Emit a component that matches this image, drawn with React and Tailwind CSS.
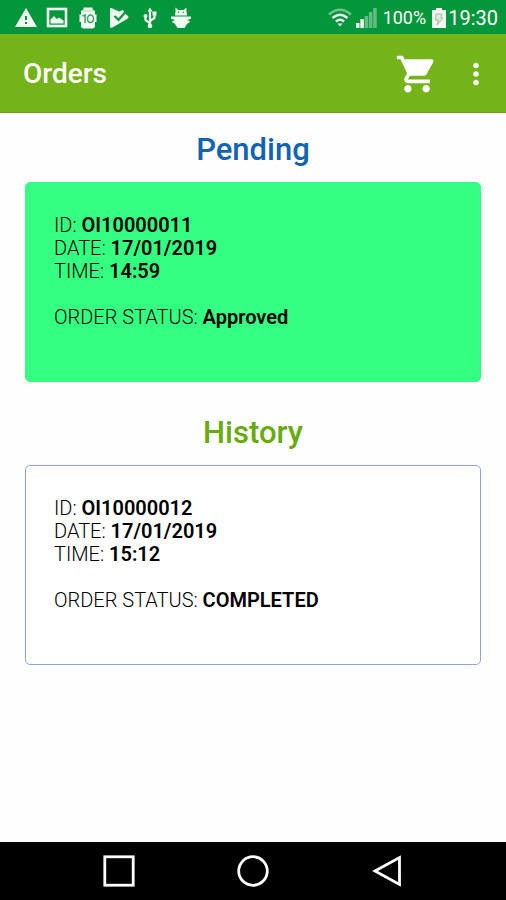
import React from 'react'
import { MdShoppingCart, MdMoreVert, MdWarning } from 'react-icons/md'

const orders = {
  pending: { id: 'OI10000011', date: '17/01/2019', time: '14:59', status: 'Approved' },
  history: { id: 'OI10000012', date: '17/01/2019', time: '15:12', status: 'COMPLETED' },
}

const StatusBar = () => {
  return (
    <div className='h-[34px] bg-[#03963b] flex items-center justify-between pl-[14px] pr-2 pt-[2px] text-white'>
      {/* Notifications */}
      <div className='flex items-center gap-[7px]'>
        <MdWarning className='w-6 h-6 text-[#f0faf0]' />
        <svg className='w-6 h-6' viewBox='0 0 24 24' fill='none'>
          <rect x='3' y='3' width='18' height='17' stroke='#f0faf0' strokeWidth='2.6' />
          <path d='M5.500 17.500v-4l3.500-3.500 2.500 3 2.500-1.500 4.500 3v3z' fill='#f0faf0' />
        </svg>
        {/* Jar */}
        <svg className='w-6 h-6' viewBox='0 0 24 24'>
          <path d='M7.500 1.500h9v2l2.500 1.500v3.500h-14V5l2.500-1.500zM3.500 8.500h17v7.500h-17zM5 16h14v5l-2 1.500H7L5 21z' fill='#f0faf0' />
          <path d='M7 4.800h10' stroke='#9ad3ab' strokeWidth='.8' />
          <path d='M6.500 10l2.500-1v8' fill='none' stroke='#3da363' strokeWidth='1.500' />
          <ellipse cx='14.500' cy='12.800' rx='3' ry='3.800' fill='none' stroke='#3da363' strokeWidth='1.500' />
        </svg>
        {/* Play with check */}
        <svg className='w-6 h-6' viewBox='0 0 24 24'>
          <path d='M3 3.500Q3 1.500 5 2.200L12 5.500 16 4l2.500 4 2.500 2Q22.500 11.500 20.500 12.800L5 21.700Q3 22.300 3 20.500z' fill='#f0faf0' />
          <path d='M7.500 10l4 3.800L18.500 6' fill='none' stroke='#03963b' strokeWidth='2.200' />
        </svg>
        {/* USB */}
        <svg className='w-6 h-6' viewBox='0 0 24 24' fill='none' stroke='#f0faf0' strokeWidth='2.200'>
          <path d='M12 4v16M12 17.500L7.500 14v-4M12 15l4.500-3V8' />
          <path d='M9.500 5.500L12 1.500l2.500 4z' fill='#f0faf0' stroke='none' />
          <circle cx='12' cy='20' r='2.300' fill='#f0faf0' stroke='none' />
          <circle cx='7.500' cy='10' r='2' fill='#f0faf0' stroke='none' />
          <path d='M14.500 5.500h4v4h-4z' fill='#f0faf0' stroke='none' />
        </svg>
        {/* Debug bug */}
        <svg className='w-6 h-6' viewBox='0 0 24 24'>
          <path d='M6.500 1.500L9.500 4h5l3-2.500v4l.5 4H6l.5-4z' fill='#f0faf0' />
          <path d='M2 10.500h20v2.200l-2.500.8L21 16l-3 2-2.500 4h-7L6 18l-3-2 1.500-2.500L2 12.700z' fill='#f0faf0' />
          <path d='M3 14.300h2.500M18.500 14.300H21' stroke='#03963b' strokeWidth='.8' />
          <circle cx='9.500' cy='6.300' r='.7' fill='#03963b' />
          <circle cx='14.500' cy='6.300' r='.7' fill='#03963b' />
        </svg>
      </div>

      {/* Connection, battery and clock */}
      <div className='flex items-center'>
        <svg className='w-6 h-5' viewBox='0 0 24 20' fill='none' stroke='#f0faf0' strokeWidth='2.600'>
          <path d='M1 6.500Q12-3 23 6.500' opacity='.45' />
          <path d='M4.500 10Q12 3.500 19.500 10' />
          <path d='M8 13.500Q12 10 16 13.500' />
          <path d='M9.500 15.500h5L12 18.500z' fill='#f0faf0' stroke='none' />
        </svg>
        <svg className='w-[21px] h-5 ml-1' viewBox='0 0 21 20' fill='#f0faf0'>
          <rect x='0' y='15' width='3.500' height='5' />
          <rect x='4.300' y='11' width='3.500' height='9' />
          <rect x='8.600' y='8' width='3.500' height='12' opacity='.4' />
          <rect x='12.900' y='4' width='3.500' height='16' opacity='.4' />
          <rect x='17.200' y='0' width='3.500' height='20' opacity='.4' />
        </svg>
        <span className='text-lg leading-6 ml-[6px]'>100%</span>
        <svg className='w-[14px] h-[22px] ml-[6px]' viewBox='0 0 14 22'>
          <path d='M4 1h6v2h4v18H0V3h4z' fill='#f0faf0' />
          <path d='M4 7h6l-1 4h2l-6 7 1.500-5H3.500z' fill='#dcebdc' stroke='#9aa89a' strokeWidth='.8' />
        </svg>
        <span className='text-xl leading-6 ml-[2px]'>19:30</span>
      </div>
    </div>
  )
}

const OrderCard = ({ order, className }) => {
  return (
    <div className={`h-[200px] rounded-[5px] border px-7 py-[31px] text-xl leading-[23px] font-light text-black ${className}`}>
      <p>ID: <b className='font-semibold'>{order.id}</b></p>
      <p>DATE: <b className='font-semibold'>{order.date}</b></p>
      <p>TIME: <b className='font-semibold'>{order.time}</b></p>
      <p className='mt-[23px]'>ORDER STATUS: <b className='font-semibold'>{order.status}</b></p>
    </div>
  )
}

const App = () => {
  return (
    <div className="min-h-screen flex flex-col bg-[#fefefe] font-['Roboto',sans-serif]">
      <StatusBar />

      {/* App bar */}
      <header className='h-[79px] bg-[#75b31a] border-b border-[#699f1a] flex items-center pl-[23px] pr-[13px] pt-[2px] text-white'>
        <h1 className='flex-1 text-[28px] leading-8 font-medium'>Orders</h1>
        <button type='button' aria-label='Cart' className='mr-5'>
          <MdShoppingCart className='w-11 h-11' />
        </button>
        <button type='button' aria-label='More options'>
          <MdMoreVert className='w-[34px] h-[34px]' />
        </button>
      </header>

      <main className='flex-1 px-[25px] pt-[19px]'>
        <h2 className='text-center text-[31px] leading-9 font-medium text-[#1263b5]'>Pending</h2>
        <OrderCard order={orders.pending} className='mt-[14px] bg-[#33ff80] border-[#33ff80]' />
        <h2 className='mt-[33px] text-center text-[31px] leading-9 font-medium text-[#67ab0d]'>History</h2>
        <OrderCard order={orders.history} className='mt-[14px] bg-white border-[#8fa5d6]' />
      </main>

      {/* Navigation buttons */}
      <nav className='h-[58px] bg-black flex items-center justify-center gap-[102px]'>
        <button type='button' aria-label='Recent apps'>
          <svg className='w-8 h-8' viewBox='0 0 32 32' fill='none' stroke='white' strokeWidth='2.800'>
            <rect x='1.800' y='1.800' width='28.400' height='28.400' />
          </svg>
        </button>
        <button type='button' aria-label='Home'>
          <svg className='w-8 h-8' viewBox='0 0 32 32' fill='none' stroke='white' strokeWidth='2.800'>
            <circle cx='16' cy='16' r='14.300' />
          </svg>
        </button>
        <button type='button' aria-label='Back'>
          <svg className='w-8 h-8' viewBox='0 0 32 32' fill='none' stroke='white' strokeWidth='2.800'>
            <path d='M4 16L28.500 2.500v27z' />
          </svg>
        </button>
      </nav>
    </div>
  )
}

export default App
